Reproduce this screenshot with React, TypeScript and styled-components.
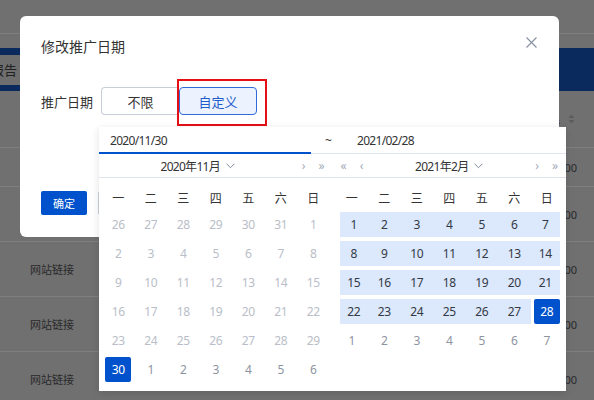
import React from 'react';
import styled, { createGlobalStyle, css } from 'styled-components';

const GlobalStyle = createGlobalStyle`
  html, body {
    margin: 0;
    padding: 0;
  }
  body {
    font-family: "Noto Sans", "Noto Sans CJK SC", sans-serif;
    color: #333;
  }
  * { box-sizing: border-box; }
`;

const FONT = `"Noto Sans", "Noto Sans CJK SC", sans-serif`;

/* ---------- background page ---------- */

const Page = styled.div`
  position: relative;
  width: 594px;
  height: 400px;
  overflow: hidden;
  background: #e0e0e3;
  font-family: ${FONT};
`;

const TopBar = styled.div`
  height: 34px;
  border-bottom: 1px solid #ffffff;
`;

const NavBar = styled.div`
  margin-top: 14px;
  height: 43px;
  background: #1454bc;
  display: flex;
  align-items: center;
`;

const NavTab = styled.div`
  height: 30px;
  width: 60px;
  margin-left: -9px;
  background: #dcdcdf;
  color: #444;
  font-size: 13px;
  display: flex;
  align-items: center;
`;

const TableHead = styled.div`
  height: 57px;
  display: flex;
  align-items: center;
  justify-content: flex-end;
  padding-right: 19px;
  gap: 8px;
  border-bottom: 1px solid #ffffff;
`;

const HeadText = styled.span`
  font-size: 12px;
  color: #7a1f3a;
`;

const SortIcon = styled.svg`
  width: 7px;
  height: 10px;
`;

const Row = styled.div<{ $h: number }>`
  height: ${(p) => p.$h}px;
  border-bottom: 1px solid #ffffff;
  display: flex;
  align-items: center;
  justify-content: space-between;
  padding: 0 17px 0 30px;
  font-size: 11px;
  color: #555;
`;

const Mask = styled.div`
  position: absolute;
  inset: 0;
  background: rgba(0, 0, 0, 0.5);
`;

/* ---------- modal ---------- */

const ModalLayer = styled.div`
  position: absolute;
  inset: 0;
  padding: 16px 0 0 20px;
`;

const Modal = styled.div`
  width: 539px;
  background: #fff;
  border-radius: 6px;
  padding: 20px 21px 22px;
`;

const ModalHeader = styled.div`
  height: 22px;
  display: flex;
  justify-content: space-between;
  align-items: flex-start;
`;

const Title = styled.div`
  font-size: 14px;
  line-height: 22px;
  color: #333;
`;

const CloseBtn = styled.svg`
  width: 11px;
  height: 11px;
  margin-top: 1px;
  margin-right: 1px;
`;

const FormRow = styled.div`
  margin-top: 29px;
  height: 28px;
  display: flex;
  align-items: center;
`;

const Label = styled.span`
  font-size: 13px;
  color: #333;
  margin-right: 8px;
`;

const RadioGroup = styled.div`
  position: relative;
  display: flex;
`;

const RadioBtn = styled.div<{ $active?: boolean; $first?: boolean }>`
  position: relative;
  width: 78px;
  height: 28px;
  display: flex;
  align-items: center;
  justify-content: center;
  font-size: 13px;
  border: 1px solid #c9cfd9;
  color: #333;
  background: #fff;
  border-radius: ${(p) => (p.$first ? '4px 0 0 4px' : '0 4px 4px 0')};
  ${(p) => p.$first && 'border-right: none;'}
  ${(p) =>
    p.$active &&
    css`
      border-color: #2f6bd8;
      border-radius: 4px;
      background: #ecf3ff;
      color: #1f5ccc;
      z-index: 1;
    `}
`;

const Annotation = styled.div`
  position: absolute;
  top: -9px;
  left: -3px;
  right: -11px;
  bottom: -12px;
  border: 2px solid #e60f16;
  pointer-events: none;
`;

const Footer = styled.div`
  margin-top: 76px;
  display: flex;
  gap: 11px;
`;

const Button = styled.div<{ $primary?: boolean }>`
  width: 46px;
  height: 24px;
  border-radius: 2px;
  display: flex;
  align-items: center;
  justify-content: center;
  font-size: 11px;
  ${(p) =>
    p.$primary
      ? css`
          background: #0052cc;
          color: #fff;
        `
      : css`
          background: #fff;
          color: #333;
          border: 1px solid #cdd3dc;
        `}
`;

/* ---------- date range picker popup ---------- */

const Picker = styled.div`
  position: absolute;
  left: -2px;
  top: calc(100% + 12px);
  width: 467px;
  background: #fff;
  box-shadow: 0 2px 8px rgba(0, 0, 0, 0.12);
  z-index: 5;
  font-family: ${FONT};
`;

const InputRow = styled.div`
  display: flex;
  height: 27px;
`;

const Field = styled.div<{ $active?: boolean; $grow?: boolean }>`
  display: flex;
  align-items: center;
  font-size: 12px;
  letter-spacing: -0.7px;
  color: #333;
  border-bottom: ${(p) => (p.$active ? '2px solid #0052cc' : '1px solid #e1e5ec')};
  ${(p) => (p.$grow ? 'flex: 1;' : '')}
`;

const StartField = styled(Field)`
  width: 212px;
  padding: 1px 0 0 11px;
`;

const Tilde = styled(Field)`
  width: 34px;
  justify-content: center;
`;

const EndField = styled(Field)`
  padding-left: 12px;
`;

const Panels = styled.div`
  display: flex;
`;

const Panel = styled.div`
  flex: 1;
  min-width: 0;
`;

const PanelHead = styled.div`
  height: 24px;
  display: flex;
  align-items: center;
  padding: 0 2px;
  border-bottom: 1px solid #dfe3ea;
`;

const Arrow = styled.span`
  width: 18px;
  text-align: center;
  font-size: 12px;
  color: #a3abb8;
  line-height: 1;
`;

const MonthTitle = styled.div`
  flex: 1;
  display: flex;
  align-items: center;
  justify-content: center;
  gap: 6px;
  font-size: 12px;
  letter-spacing: -0.7px;
  color: #333;
`;

const Chevron = styled.svg`
  width: 9px;
  height: 6px;
`;

const Body = styled.div`
  padding: 8px 3px 7px;
`;

const Grid = styled.div`
  display: grid;
  grid-template-columns: repeat(7, 1fr);
`;

const WeekDay = styled.div`
  height: 24px;
  display: flex;
  align-items: center;
  justify-content: center;
  font-size: 12px;
  color: #333;
`;

type Kind = 'disabled' | 'other' | 'normal' | 'range' | 'selected';

const Cell = styled.div`
  height: 29px;
  padding: 2px 0;
  display: flex;
  justify-content: center;
`;

const Day = styled.div<{ $kind: Kind; $col: number }>`
  height: 25px;
  display: flex;
  align-items: center;
  justify-content: center;
  font-size: 12px;
  letter-spacing: -0.3px;
  width: 100%;
  color: ${(p) =>
    p.$kind === 'disabled'
      ? '#b9bec8'
      : p.$kind === 'other'
      ? '#8e949f'
      : p.$kind === 'selected'
      ? '#fff'
      : '#333a45'};
  ${(p) =>
    p.$kind === 'range' &&
    css`
      background: #dce8fc;
      margin-left: ${p.$col === 0 ? 4 : 0}px;
      margin-right: ${p.$col === 6 ? 3 : 0}px;
    `}
  ${(p) =>
    p.$kind === 'selected' &&
    css`
      width: 26px;
      background: #0052cc;
      border-radius: 2px;
    `}
`;

const WEEK = ['一', '二', '三', '四', '五', '六', '日'];

type D = { n: number; k: Kind };

const leftDays: D[] = [
  ...[26, 27, 28, 29, 30, 31].map((n) => ({ n, k: 'disabled' as Kind })),
  ...Array.from({ length: 29 }, (_, i) => ({ n: i + 1, k: 'disabled' as Kind })),
  { n: 30, k: 'selected' },
  ...[1, 2, 3, 4, 5, 6].map((n) => ({ n, k: 'other' as Kind })),
];

const rightDays: D[] = [
  ...Array.from({ length: 27 }, (_, i) => ({ n: i + 1, k: 'range' as Kind })),
  { n: 28, k: 'selected' },
  ...[1, 2, 3, 4, 5, 6, 7].map((n) => ({ n, k: 'other' as Kind })),
];

const ChevronIcon = () => (
  <Chevron viewBox="0 0 9 6">
    <path d="M0.6 0.8 L4.5 4.7 L8.4 0.8" fill="none" stroke="#7d8696" strokeWidth="1" />
  </Chevron>
);

const Calendar = ({ title, days, prev }: { title: string; days: D[]; prev?: boolean }) => (
  <Panel>
    <PanelHead>
      {prev && (
        <>
          <Arrow>«</Arrow>
          <Arrow>‹</Arrow>
        </>
      )}
      <MonthTitle>
        {title}
        <ChevronIcon />
      </MonthTitle>
      <Arrow>›</Arrow>
      <Arrow>»</Arrow>
    </PanelHead>
    <Body>
      <Grid>
        {WEEK.map((w) => (
          <WeekDay key={w}>{w}</WeekDay>
        ))}
        {days.map((d, i) => (
          <Cell key={i}>
            <Day $kind={d.k} $col={i % 7}>
              {d.n}
            </Day>
          </Cell>
        ))}
      </Grid>
    </Body>
  </Panel>
);

export default function App() {
  const rowHeights = [39, 55, 55, 55, 55];
  return (
    <>
      <GlobalStyle />
      <Page>
        <TopBar />
        <NavBar>
          <NavTab>报告</NavTab>
        </NavBar>
        <TableHead>
          <HeadText>消耗</HeadText>
          <SortIcon viewBox="0 0 7 10">
            <path d="M3.5 0.5 L6.5 4 L0.5 4 Z" fill="#b8b8bc" />
            <path d="M3.5 9.5 L6.5 6 L0.5 6 Z" fill="#b8b8bc" />
          </SortIcon>
        </TableHead>
        {rowHeights.map((h, i) => (
          <Row key={i} $h={h}>
            <span>网站链接</span>
            <span>0.00</span>
          </Row>
        ))}
        <Mask />
        <ModalLayer>
          <Modal>
            <ModalHeader>
              <Title>修改推广日期</Title>
              <CloseBtn viewBox="0 0 11 11">
                <path d="M0.5 0.5 L10.5 10.5 M10.5 0.5 L0.5 10.5" stroke="#8a93a3" strokeWidth="1.2" />
              </CloseBtn>
            </ModalHeader>
            <FormRow>
              <Label>推广日期</Label>
              <RadioGroup>
                <RadioBtn $first>不限</RadioBtn>
                <RadioBtn $active>
                  自定义
                  <Annotation />
                </RadioBtn>
                <Picker>
                  <InputRow>
                    <StartField $active>2020/11/30</StartField>
                    <Tilde>~</Tilde>
                    <EndField $grow>2021/02/28</EndField>
                  </InputRow>
                  <Panels>
                    <Calendar title="2020年11月" days={leftDays} />
                    <Calendar title="2021年2月" days={rightDays} prev />
                  </Panels>
                </Picker>
              </RadioGroup>
            </FormRow>
            <Footer>
              <Button $primary>确定</Button>
              <Button>取消</Button>
            </Footer>
          </Modal>
        </ModalLayer>
      </Page>
    </>
  );
}
